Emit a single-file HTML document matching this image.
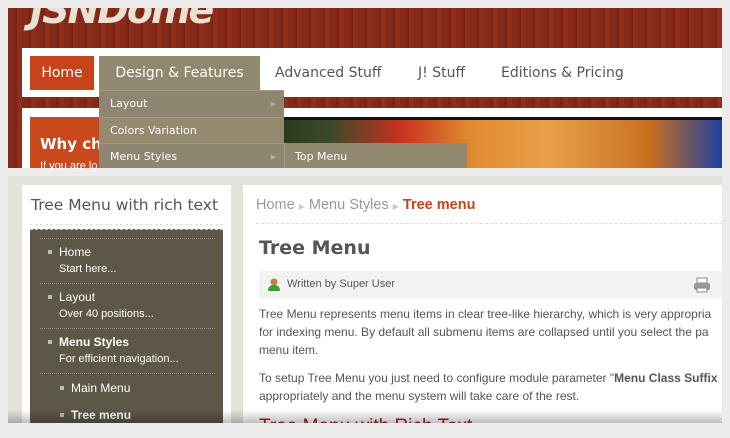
<!DOCTYPE html>
<html><head><meta charset="utf-8"><style>
*{margin:0;padding:0;box-sizing:border-box}
body{width:730px;height:434px;background:#ececec;position:relative;overflow:hidden;font-family:"Liberation Sans",sans-serif}
.a{position:absolute}
.dv{font-family:"DejaVu Sans",sans-serif}
#top{left:8px;top:8px;width:714px;height:160px;overflow:hidden;background:repeating-linear-gradient(90deg,#86291a 0 6px,#7c2416 6px 9px,#8e2e1c 9px 14px);}
#logo{left:22px;top:-20px;font:bold italic 38px "DejaVu Sans",sans-serif;color:#e8e2d4;letter-spacing:-2px}
#nav{left:14px;top:40px;width:700px;height:49px;background:#fff}
#body2{left:14px;top:100px;width:700px;height:60px;background:#fff}
.ni{height:34px;line-height:34px;font-size:14px;color:#555;font-family:"DejaVu Sans",sans-serif;white-space:nowrap}
.dr{position:absolute;left:0;width:185px;height:26px;line-height:26px;padding-left:11px;color:#fff;font-size:11px;font-family:"DejaVu Sans",sans-serif;border-top:1px solid #a39b85}
.dr i{position:absolute;right:8px;top:0;font-style:normal;font-size:7px;color:#b8b09a}
#bot{left:8px;top:176px;width:714px;height:247px;background:#e4e3d9}
#side{left:22px;top:185px;width:209px;height:238px;background:#fff}
#main{left:243px;top:185px;width:479px;height:238px;background:#fff}
#sh{left:31px;top:196px;font-size:15.5px;color:#555;font-family:"DejaVu Sans",sans-serif;white-space:nowrap}
#tree{left:30px;top:229px;width:193px;height:194px;background:#5d5747;border-top:1px dashed #ccc}
.ti{position:absolute;left:0;color:#fff;font-size:12px;white-space:nowrap}
.sep{position:absolute;left:10px;width:175px;border-top:1px dotted #9a937f}
.bl{position:absolute;width:4px;height:4px;background:#bbb}
#bc{left:256px;top:197px;font-size:14.5px;color:#999;white-space:nowrap}
#bc b{color:#c8421a}
#bcl{left:256px;top:223px;width:466px;border-top:1px dashed #ddd}
#h1{left:259px;top:237px;font:bold 19px "DejaVu Sans",sans-serif;color:#555}
#by{left:259px;top:271px;width:463px;height:27px;background:#f2f2f2;font-size:11px;color:#555;line-height:27px;padding-left:28px}
.p{left:259px;font-size:12px;color:#555;line-height:18px;white-space:nowrap}
#fade{left:8px;top:410px;width:714px;height:13px;background:linear-gradient(rgba(0,0,0,0),rgba(0,0,0,.25))}
</style></head><body>
<div id="top" class="a">
<div id="logo" class="a">JSNDome</div>
<div id="nav" class="a"></div>
<div id="body2" class="a"></div>
</div>
<div class="a ni" style="top:56px;left:30px;width:64px;background:#c8421a;color:#fff;text-align:center">Home</div>
<div class="a ni" style="top:56px;left:99px;width:161px;background:#918870;color:#fff;text-align:center">Design &amp; Features</div>
<div class="a ni" style="top:56px;left:275px">Advanced Stuff</div>
<div class="a ni" style="top:56px;left:418px">J! Stuff</div>
<div class="a ni" style="top:56px;left:501px">Editions &amp; Pricing</div>
<div class="a" style="left:30px;top:117px;width:692px;height:51px;background:linear-gradient(90deg,#c84a1c 0 253px,#2b3a1a 253px,#3a4a2a 300px,#c83020 370px,#e08a30 440px,#e8a048 520px,#c87020 620px,#2040a0 692px)"></div>
<div class="a" style="left:283px;top:117px;width:439px;height:3px;background:#111"></div>
<div class="a dv" style="left:40px;top:135px;color:#fff;font-weight:bold;font-size:15px">Why ch</div>
<div class="a" style="left:40px;top:160px;color:#fff;font-size:11px">If you are lo</div>
<div class="a" style="left:99px;top:90px;width:185px;height:78px;background:#8e8670">
<div class="dr" style="top:0">Layout<i>▶</i></div>
<div class="dr" style="top:27px;background:#958a70">Colors Variation</div>
<div class="dr" style="top:53px">Menu Styles<i>▶</i></div>
</div>
<div class="a dv" style="left:284px;top:143px;width:183px;height:25px;background:#918870;line-height:27px;padding-left:10px;color:#fff;font-size:11px;border-left:1px solid #a39b85">Top Menu</div>
<div id="bot" class="a"></div>
<div id="side" class="a"></div>
<div id="main" class="a"></div>
<div id="sh" class="a">Tree Menu with rich text</div>
<div class="a" style="left:30px;top:224px;width:193px;border-top:1px dashed #dde"></div>
<div id="tree" class="a">
<div class="sep" style="top:8px"></div>
<div class="bl" style="left:18px;top:20px"></div>
<div class="ti" style="top:15px;left:29px">Home</div>
<div class="ti" style="top:33px;left:29px;font-size:11px">Start here...</div>
<div class="sep" style="top:53px"></div>
<div class="bl" style="left:18px;top:65px"></div>
<div class="ti" style="top:60px;left:29px">Layout</div>
<div class="ti" style="top:78px;left:29px;font-size:11px">Over 40 positions...</div>
<div class="sep" style="top:98px"></div>
<div class="bl" style="left:18px;top:110px"></div>
<div class="ti" style="top:105px;left:29px"><b>Menu Styles</b></div>
<div class="ti" style="top:123px;left:29px;font-size:11px">For efficient navigation...</div>
<div class="sep" style="top:143px"></div>
<div class="bl" style="left:30px;top:156px"></div>
<div class="ti" style="top:151px;left:41px">Main Menu</div>
<div class="bl" style="left:30px;top:183px"></div>
<div class="ti" style="top:178px;left:41px"><b>Tree menu</b></div>
</div>
<div id="bc" class="a">Home <span style="font-size:8px;color:#ccc">▶</span> Menu Styles <span style="font-size:8px;color:#ccc">▶</span> <b>Tree menu</b></div>
<div id="bcl" class="a"></div>
<div id="h1" class="a">Tree Menu</div>
<div id="by" class="a">Written by Super User</div>
<svg class="a" style="left:267px;top:277px" width="14" height="14"><circle cx="7" cy="5" r="3.5" fill="#c97a3a"/><path d="M1 14 Q1 8 7 8 Q13 8 13 14Z" fill="#3aa030"/></svg>
<svg class="a" style="left:693px;top:277px" width="18" height="16"><rect x="4" y="1" width="10" height="5" fill="#fff" stroke="#888"/><rect x="1" y="6" width="16" height="7" rx="2" fill="#999"/><rect x="4" y="11" width="10" height="4" fill="#fff" stroke="#888"/></svg>
<div class="a p" style="top:305px">Tree Menu represents menu items in clear tree-like hierarchy, which is very appropria<br>for indexing menu. By default all submenu items are collapsed until you select the pa<br>menu item.</div>
<div class="a p" style="top:369px">To setup Tree Menu you just need to configure module parameter "<b>Menu Class Suffix</b><br>appropriately and the menu system will take care of the rest.</div>
<div class="a" style="left:259px;top:416px;font-size:19px;color:#a02020">Tree Menu with Rich Text</div>
<div id="fade" class="a"></div>
<div class="a" style="left:0;top:423px;width:730px;height:11px;background:#ececec"></div>
<div class="a" style="left:722px;top:0;width:8px;height:434px;background:#ececec"></div>
</body></html>
